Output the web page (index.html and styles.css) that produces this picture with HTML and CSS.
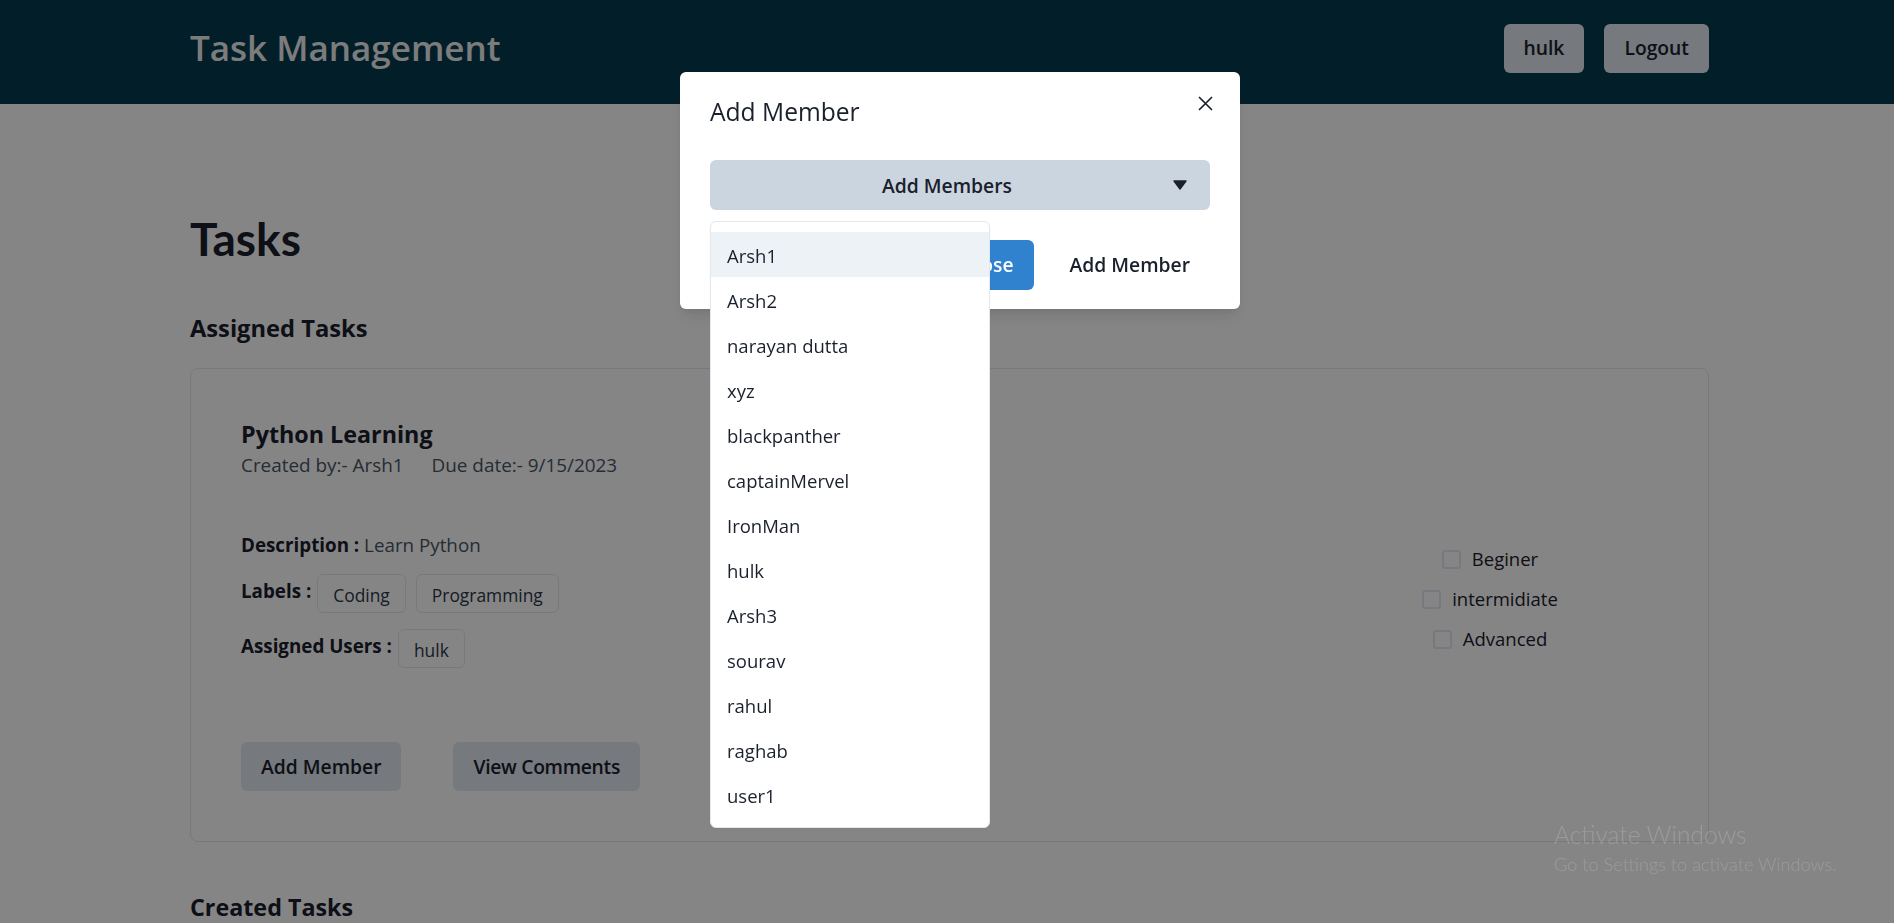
FILE: index.html
```html
<!DOCTYPE html>
<html lang="en">
<head>
<meta charset="utf-8">
<title>Task Management</title>
<link rel="stylesheet" href="styles.css">
</head>
<body>
<header class="topbar">
  <div class="container topbar-inner">
    <h1 class="brand">Task Management</h1>
    <div class="topbar-actions">
      <button class="btn btn-gray">hulk</button>
      <button class="btn btn-gray">Logout</button>
    </div>
  </div>
</header>

<main class="container page">
  <h2 class="page-title">Tasks</h2>
  <h3 class="section-title">Assigned Tasks</h3>

  <section class="task-card">
    <div class="task-main">
      <h4 class="task-title">Python Learning</h4>
      <div class="task-meta"><span>Created by:- Arsh1</span><span>Due date:- 9/15/2023</span></div>
      <p class="task-desc"><b>Description :</b> Learn Python</p>
      <div class="tag-row">
        <b class="tag-label">Labels :</b>
        <span class="tag">Coding</span>
        <span class="tag">Programming</span>
      </div>
      <div class="tag-row">
        <b class="tag-label">Assigned Users :</b>
        <span class="tag">hulk</span>
      </div>
      <div class="task-actions">
        <button class="btn btn-gray">Add Member</button>
        <button class="btn btn-gray btn-tight">View Comments</button>
      </div>
    </div>
    <div class="task-level">
      <label class="check"><span class="check-box"></span><span>Beginer</span></label>
      <label class="check"><span class="check-box"></span><span>intermidiate</span></label>
      <label class="check"><span class="check-box"></span><span>Advanced</span></label>
    </div>
  </section>

  <h3 class="section-title created">Created Tasks</h3>
</main>

<div class="overlay"></div>

<div class="modal-layer">
  <div class="modal" role="dialog">
    <h2 class="modal-title">Add Member</h2>
    <button class="modal-close" aria-label="Close">
      <svg width="15" height="15" viewBox="0 0 15 15"><path d="M1.5 1.5 L13.5 13.5 M13.5 1.5 L1.5 13.5" stroke="#1A202C" stroke-width="1.7" stroke-linecap="round" fill="none"/></svg>
    </button>
    <div class="modal-body">
      <div class="menu">
        <button class="menu-button">
          <span class="menu-button-text">Add Members</span>
          <svg class="menu-caret" width="16" height="16" viewBox="0 0 24 24"><path fill="#1A202C" d="M21,5H3C2.621,5,2.275,5.214,2.105,5.553C1.937,5.892,1.973,6.297,2.2,6.6l9,12c0.188,0.252,0.485,0.4,0.8,0.4s0.611-0.148,0.8-0.4l9-12c0.228-0.303,0.264-0.708,0.095-1.047C21.725,5.214,21.379,5,21,5z"/></svg>
        </button>
        <ul class="menu-list">
          <li class="menu-item active">Arsh1</li>
          <li class="menu-item">Arsh2</li>
          <li class="menu-item">narayan dutta</li>
          <li class="menu-item">xyz</li>
          <li class="menu-item">blackpanther</li>
          <li class="menu-item">captainMervel</li>
          <li class="menu-item">IronMan</li>
          <li class="menu-item">hulk</li>
          <li class="menu-item">Arsh3</li>
          <li class="menu-item">sourav</li>
          <li class="menu-item">rahul</li>
          <li class="menu-item">raghab</li>
          <li class="menu-item">user1</li>
        </ul>
      </div>
    </div>
    <div class="modal-footer">
      <button class="btn btn-blue">Close</button>
      <button class="btn btn-ghost">Add Member</button>
    </div>
  </div>
</div>

<div class="watermark">
  <div class="wm-title">Activate Windows</div>
  <div class="wm-sub">Go to Settings to activate Windows.</div>
</div>
</body>
</html>
```

FILE: styles.css
```css
* { box-sizing: border-box; }

html, body {
  margin: 0;
  padding: 0;
  overflow: hidden;
}

body {
  font-family: "Open Sans", "Noto Sans", sans-serif;
  color: #1A202C;
  background: #ffffff;
}

.container {
  padding-left: 190px;
  padding-right: 185px;
}

/* ---------- top bar ---------- */
.topbar {
  background: #053B50;
  height: 104px;
}

.topbar-inner {
  height: 100%;
  display: flex;
  align-items: center;
  justify-content: space-between;
  padding-bottom: 8px;
}

.brand {
  margin: 0;
  font-size: 35px;
  line-height: 44px;
  font-weight: 600;
  color: #EEEEEE;
}

.topbar-actions {
  display: flex;
  gap: 20px;
}

/* ---------- buttons ---------- */
.btn {
  font-family: inherit;
  height: 49px;
  padding: 0 20px;
  border: 0;
  border-radius: 6px;
  font-size: 19.3px;
  font-weight: 600;
  line-height: 1.2;
  color: #1A202C;
  display: inline-flex;
  align-items: center;
  justify-content: center;
  cursor: pointer;
}

.btn-gray { background: #E2E8F0; }
.btn-blue { background: #3182CE; color: #ffffff; }
.btn-ghost { background: transparent; }
.btn-tight { letter-spacing: -0.3px; }

/* ---------- page ---------- */
.page {
  padding-top: 107px;
}

.page-title {
  margin: 0;
  font-family: "Lato", "Open Sans", sans-serif;
  font-size: 46px;
  line-height: 55px;
  font-weight: 700;
}

.section-title {
  margin: 48px 0 0;
  font-size: 23.7px;
  line-height: 29px;
  font-weight: 700;
}

.section-title.created {
  margin-top: 51px;
  font-size: 23.3px;
}

.task-card {
  margin-top: 25px;
  border: 1px solid #E2E8F0;
  border-radius: 8px;
  padding: 50px;
  display: flex;
}

.task-main {
  flex: 1;
}

.task-title {
  margin: 0;
  font-size: 23.3px;
  line-height: 30px;
  font-weight: 700;
}

.task-meta {
  display: flex;
  gap: 28px;
  font-size: 18.9px;
  line-height: 32px;
  font-weight: 400;
  color: #4A5568;
}

.task-desc {
  margin: 51px 0 0;
  font-size: 18.8px;
  line-height: 27px;
  color: #4A5568;
}

.task-desc b {
  color: #1A202C;
}

.tag-row {
  margin-top: 15px;
  display: flex;
  align-items: flex-start;
  gap: 10px;
}

.tag-row + .tag-row {
  margin-top: 16px;
}

.tag-label {
  font-size: 18.8px;
  line-height: 27px;
  margin-top: 4px;
  margin-right: -4px;
}

.tag {
  border: 1px solid #E2E8F0;
  border-radius: 6px;
  padding: 7px 15px 3px;
  font-size: 17.4px;
  line-height: 27px;
  color: #2D3748;
}

.task-actions {
  margin-top: 74px;
  display: flex;
  gap: 52px;
}

.task-level {
  width: 336px;
  align-self: center;
  margin-bottom: 12px;
  display: flex;
  flex-direction: column;
  align-items: center;
}

.check {
  display: flex;
  align-items: center;
  gap: 11px;
  height: 40px;
  font-size: 18.5px;
  line-height: 40px;
  color: #1A202C;
}

.check-box {
  width: 19px;
  height: 19px;
  border: 2px solid #E2E8F0;
  border-radius: 3px;
  background: #ffffff;
}

/* ---------- overlay & modal ---------- */
.overlay {
  position: fixed;
  inset: 0;
  background: rgba(0, 0, 0, 0.48);
}

.modal-layer {
  position: fixed;
  inset: 0;
  display: flex;
  justify-content: center;
  align-items: flex-start;
  padding: 72px 0 0 26px;
}

.modal {
  position: relative;
  width: 560px;
  background: #ffffff;
  border-radius: 6px;
  box-shadow: 0 10px 15px -3px rgba(0, 0, 0, 0.1), 0 4px 6px -2px rgba(0, 0, 0, 0.05);
}

.modal-title {
  margin: 0;
  padding: 23.5px 30px 0 30px;
  font-size: 24.6px;
  line-height: 32px;
  font-weight: 400;
}

.modal-close {
  position: absolute;
  top: 24px;
  right: 27px;
  width: 15px;
  height: 15px;
  padding: 0;
  border: 0;
  background: transparent;
  display: flex;
}

.modal-body {
  padding: 32.5px 30px 0;
}

.menu {
  position: relative;
}

.menu-button {
  width: 100%;
  height: 50px;
  border: 0;
  border-radius: 6px;
  background: #CBD5E0;
  font-family: inherit;
  font-size: 19.3px;
  font-weight: 600;
  color: #1A202C;
  display: flex;
  align-items: center;
  padding: 0 22px 0 20px;
}

.menu-button-text {
  flex: 1;
  text-align: center;
}

.menu-caret {
  margin-left: 8px;
}

.menu-list {
  position: absolute;
  z-index: 2;
  top: 61px;
  left: 0;
  width: 280px;
  margin: 0;
  padding: 10px 0;
  list-style: none;
  background: #ffffff;
  border: 1px solid #E2E8F0;
  border-radius: 6px;
  box-shadow: 0 1px 2px 0 rgba(0, 0, 0, 0.05);
}

.menu-item {
  height: 45px;
  padding: 3px 16px 0;
  font-size: 18.5px;
  line-height: 42px;
  color: #1A202C;
}

.menu-item.active {
  background: #EDF2F7;
}

.modal-footer {
  display: flex;
  justify-content: flex-end;
  gap: 16px;
  padding: 30px 30px 19px;
}

.modal-footer .btn {
  height: 50px;
}

/* ---------- windows watermark ---------- */
.watermark {
  position: fixed;
  left: 1554px;
  top: 820px;
  font-family: "Lato", "Open Sans", sans-serif;
  color: rgba(255, 255, 255, 0.17);
  font-weight: 300;
  pointer-events: none;
}

.wm-title {
  font-size: 24.5px;
  line-height: 30px;
}

.wm-sub {
  margin-top: 1px;
  font-size: 18.2px;
  line-height: 27px;
}
```
